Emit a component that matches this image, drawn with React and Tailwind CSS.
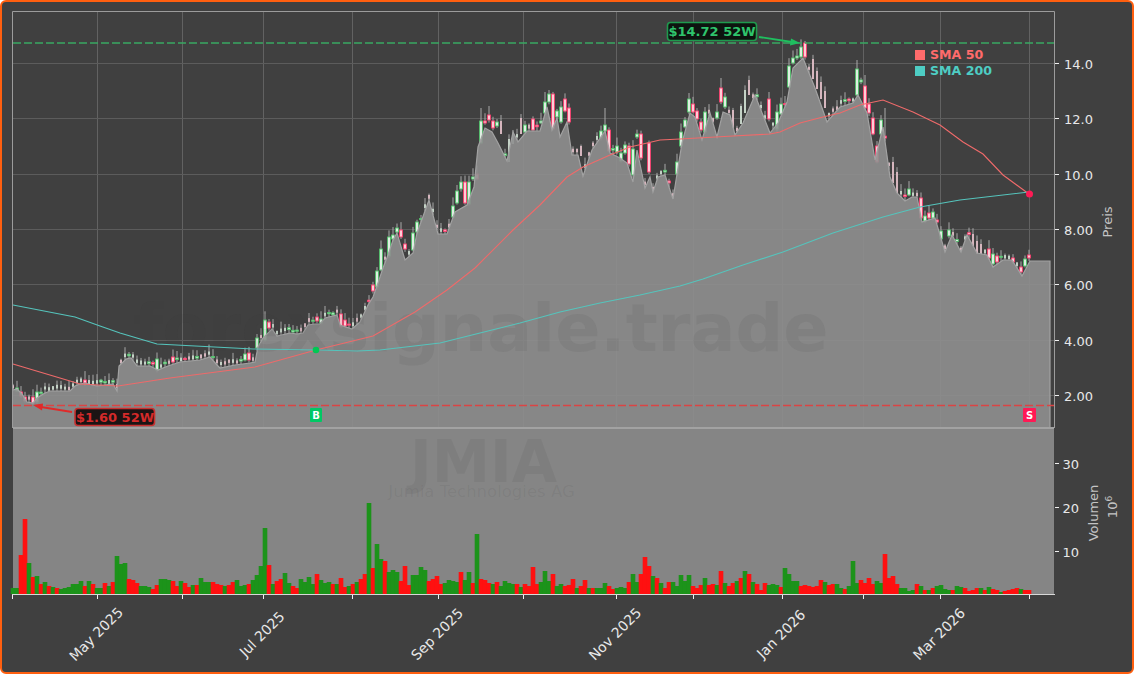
import React from 'react';

const toPoints = (s) => s.trim().split(/\s+/).map((p) => p.split(',').map(Number));

const CLOSE_LINE = toPoints(`13,390 17,389 22,394 27,402 33,403 37,398 45,393 50,391 70,391 75,386 80,384 85,383 92,385 97,386 105,385 113,384 117,391 119,366 126,359 131,358 137,366 150,366 158,370 168,366 180,362 200,360 210,357 217,365 220,368 235,365 250,363 255,362 258,347 263,338 272,329 277,336 290,333 297,334 303,333 308,325 315,324 320,324 325,318 337,315 340,325 352,329 360,322 368,305 373,297 378,283 383,268 388,255 393,240 397,233 405,260 413,253 417,233 429,200 438,234 447,234 455,212 467,205 474,187 478,147 485,128 492,132 498,143 507,161 513,132 518,142 527,131 540,131 547,107 552,130 557,118 560,137 567,122 572,155 578,155 583,176 592,150 605,131 610,153 620,158 627,163 633,182 637,150 645,188 650,177 653,192 658,177 665,175 673,199 682,143 690,113 695,117 702,140 710,113 717,137 723,112 730,115 735,135 743,123 755,95 770,133 778,123 787,102 793,68 803,58 815,88 827,122 840,107 853,103 858,95 867,113 875,160 883,127 890,177 897,193 905,201 912,197 917,197 922,222 935,218 945,252 952,235 961,252 967,235 977,253 987,255 993,267 1003,260 1012,260 1022,276 1030,261`);

const SMA50 = '13,364 80,384 118,386 170,378 255,367 316,350 373,336 415,312 447,290 475,268 513,230 540,205 567,177 583,167 610,155 630,147 660,140 680,139 733,136 770,134 780,132 800,123 823,117 840,113 860,105 883,100 913,112 940,125 963,142 983,154 1003,175 1029,194';
const SMA200 = '13,305 75,317 100,326 120,333 157,344 253,349 317,350 357,351 380,350 440,343 480,333 520,323 560,312 600,303 640,295 680,286 703,279 743,265 783,252 833,233 883,217 920,207 960,200 1029,192';

// [x, body top, body bottom, 1 green / 0 red]
const BIG_CANDLES = [
  [16,388,391,1],[20,392,396,0],[24,397,401,0],[32,397,403,0],[36,392,402,1],[85,380,383,0],[158,359,370,1],[173,357,362,0],
  [243,354,360,1],[247,353,360,0],[255,348,356,1],[258,338,348,1],[263,320,340,1],[267,322,328,0],[317,317,321,0],[320,319,323,1],
  [340,314,327,0],[344,320,326,0],[373,285,291,0],[377,271,287,1],[381,249,270,1],[389,237,256,1],[393,235,239,1],[397,228,232,1],
  [401,230,237,0],[405,244,249,0],[413,233,250,1],[417,222,232,1],[451,206,217,1],[455,191,203,1],[459,182,189,1],[463,182,203,0],
  [467,182,204,1],[471,177,179,1],[475,174,179,0],[479,121,143,1],[483,121,123,0],[487,115,120,0],[491,121,128,0],[495,122,126,1],
  [523,125,132,1],[531,119,130,0],[539,121,123,1],[543,102,113,1],[547,94,102,1],[551,94,129,0],[555,111,117,1],[559,107,122,1],
  [563,99,111,0],[567,108,122,0],[600,131,138,1],[604,125,131,1],[608,130,151,0],[616,146,152,1],[620,153,161,1],[624,145,153,1],
  [628,146,164,0],[632,149,175,1],[636,134,137,1],[640,134,158,0],[648,143,172,0],[677,162,174,1],[681,132,146,1],[685,120,127,1],
  [689,99,112,1],[693,104,112,0],[697,111,119,0],[701,122,130,0],[705,112,132,1],[717,112,118,1],[721,88,102,0],[725,97,107,1],
  [767,99,119,0],[775,112,129,1],[779,104,114,1],[787,66,87,1],[791,58,63,1],[795,56,58,1],[799,47,57,1],[803,43,57,0],
  [855,69,95,1],[859,80,82,1],[863,86,108,0],[867,104,113,0],[871,118,134,0],[875,146,162,0],[879,120,134,1],[908,189,195,1],
  [920,198,218,0],[924,216,221,1],[928,213,218,0],[932,212,218,1],[936,220,222,0],[940,231,239,1],[948,230,236,1],[989,249,258,0],
  [993,254,264,1],[997,256,262,0],[1013,258,262,0],[1021,267,272,0],[1025,259,266,1],[1029,255,258,0],
];

// washed out candles with a long body: [x, top, bottom, 1 green / 0 red]
const PALE_CANDLES = [
  [499,122,133,0],[507,140,161,1],[511,135,143,1],[519,119,133,0],[580,147,155,0],[734,111,127,0],[741,107,123,1],[746,91,112,1],
  [750,81,94,0],[811,60,78,0],[815,72,88,0],[819,83,98,0],[823,92,107,0],[892,163,182,0],[896,173,192,0],[973,235,245,0],[977,242,253,0],[981,245,253,0],
];

// wicks that reach well above the body: [x, high]
const TALL_WICKS = [[479,108],[487,106],[543,92],[547,90],[604,108],[689,93],[721,78],[767,92],[803,41],[855,60],[863,75],[883,108]];

// signed bar heights in px: positive green, negative red
const VOLUME = [
  6,6,-39,-75,31,-17,18,-10,12,-8,7,-6,5,6,7,10,10,13,-8,13,-10,6,6,-11,8,-12,38,30,31,-15,-14,-11,8,8,7,-5,-9,15,15,14,-13,-8,13,-11,-7,9,-9,16,12,12,-12,-10,-9,8,-9,-12,14,8,9,-10,14,19,28,66,-29,10,-13,-15,21,11,-8,-6,15,12,17,10,-20,14,11,12,-10,10,
  -16,-7,8,-10,12,-15,-20,91,-26,50,35,-33,22,24,22,-13,-28,-9,19,19,27,24,-13,-15,-18,-10,11,14,13,12,-22,14,22,-11,60,-15,-14,-11,10,-12,8,13,11,10,-10,7,-10,-8,-27,-10,12,23,13,-20,8,10,-8,-9,-15,6,-8,-14,6,-6,6,6,11,-8,-5,6,7,6,-12,20,12,-20,-37,-28,18,-16,11,-6,-12,12,8,
  19,13,19,-8,-6,-9,16,-9,-10,9,-23,11,-8,-11,13,-16,23,-20,12,-10,-4,-11,9,10,9,-7,26,20,13,13,-8,-9,-8,-7,-8,-14,12,-9,-10,10,6,-5,8,33,11,-14,-11,-16,-10,13,11,-40,-16,-18,-10,6,6,3,4,-10,8,-4,4,-6,8,9,5,4,-4,8,7,-6,-3,-4,-6,6,-4,7,-5,-4,2,-3,-4,-5,-6,5,-4,-4,
];

const GRID_X = [97.5, 182.5, 263.5, 352.5, 438.5, 523.5, 616.5, 693.5, 782.5, 863.5, 940.5, 1029.5];
const TICK_X = [12.5, ...GRID_X];
const PRICE_TICKS = [['14.0', 63.5], ['12.0', 118.5], ['10.0', 174.5], ['8.00', 229.5], ['6.00', 284.5], ['4.00', 340.5], ['2.00', 395.5]];
const VOL_TICKS = [['30', 463.5], ['20', 507.5], ['10', 551.5]];
const MONTHS = [['May 2025', 97], ['Jul 2025', 263], ['Sep 2025', 438], ['Nov 2025', 616], ['Jan 2026', 782], ['Mar 2026', 940]];

const rnd = (i, k) => {
  const v = Math.sin(i * 12.9898 + k * 78.233) * 43758.5453;
  return v - Math.floor(v);
};

const indexOf = (x) => Math.round((x - 13) / 4);

const lineY = (x) => {
  for (let n = 1; n < CLOSE_LINE.length; n++) {
    const [x1, y1] = CLOSE_LINE[n];
    if (x <= x1) {
      const [x0, y0] = CLOSE_LINE[n - 1];
      return y0 + ((x - x0) / (x1 - x0)) * (y1 - y0);
    }
  }
  return CLOSE_LINE[CLOSE_LINE.length - 1][1];
};

const buildCandles = () => {
  const big = new Map(BIG_CANDLES.map((c) => [indexOf(c[0]), c]));
  const pale = new Map(PALE_CANDLES.map((c) => [indexOf(c[0]), c]));
  const tall = new Map(TALL_WICKS.map((w) => [indexOf(w[0]), w[1]]));
  const out = [];
  for (let i = 0; i < 255; i++) {
    const x = 13 + i * 4;
    const hit = big.get(i);
    const soft = pale.get(i);
    let c;
    if (hit) {
      c = { x, top: hit[1], bottom: hit[2], up: hit[3] === 1, high: hit[1] - 2 - rnd(i, 1) * 7, low: hit[2] + 1 + rnd(i, 2) * 2, thin: false };
    } else if (soft) {
      c = { x, top: soft[1], bottom: soft[2], up: soft[3] === 1, high: soft[1] - 2 - rnd(i, 1) * 5, low: soft[2] + 1, thin: true };
    } else {
      const base = lineY(x);
      const top = base - 3 - rnd(i, 3) * 3;
      const size = 1 + rnd(i, 4);
      c = { x, top, bottom: top + size, up: rnd(i, 5) > 0.45, high: top - 1 - rnd(i, 1) * 7, low: base, thin: rnd(i, 6) > 0.3 };
    }
    if (tall.has(i)) c.high = tall.get(i);
    out.push(c);
  }
  return out;
};

const CANDLES = buildCandles();
const areaPoints = CLOSE_LINE.map((p) => p.join(',')).join(' ');
const textCls = "font-['DejaVu_Sans',sans-serif]";

const Candle = ({ c }) => (
  <g>
    <line x1={c.x} x2={c.x} y1={c.high} y2={c.low} className="stroke-[#b4b4b4]" strokeWidth="0.9" />
    {c.thin ? (
      <rect x={c.x - 1} y={c.top - 1} width="2" height={c.bottom - c.top + 2} className={c.up ? 'fill-[#c4d2c6]' : 'fill-[#d6b6be]'} />
    ) : (
      <rect
        x={c.x - 1.4}
        y={c.top}
        width="2.8"
        height={c.bottom - c.top}
        strokeWidth="0.9"
        className={c.up ? 'fill-[#e6f2e8] stroke-[#4fc46a]' : 'fill-[#ffd4dd] stroke-[#ff3d6e]'}
      />
    )}
  </g>
);

export default function App() {
  return (
    <div className="w-[1134px] h-[674px] bg-white">
      <div className="w-full h-full border-2 border-[#ff5f0f] rounded-md overflow-hidden bg-[#404040]">
        <svg width="1130" height="670" viewBox="2 2 1130 670" className="block">
          {/* grid */}
          {GRID_X.map((x) => (
            <line key={x} x1={x} x2={x} y1="12" y2="428" className="stroke-[#626262]" strokeWidth="1" />
          ))}
          {PRICE_TICKS.map(([t, y]) => (
            <line key={t} x1="13" x2="1054" y1={y} y2={y} className="stroke-[#5c5c5c]" strokeWidth="1" />
          ))}

          {/* candles, the area goes on top of them */}
          {CANDLES.map((c) => (
            <Candle key={c.x} c={c} />
          ))}
          <polygon points={`13,428 ${areaPoints} 1050,261 1050,428`} className="fill-[#8f8f8f]" fillOpacity="0.9" />
          <polyline points={`${areaPoints} 1050,261 1050,428`} fill="none" className="stroke-[#a2a2a2]" strokeWidth="1.2" />

          {/* volume panel */}
          <rect x="13" y="428" width="1041" height="166" className="fill-[#858585]" />
          <line x1="13" x2="1054" y1="428" y2="428" className="stroke-[#a2a2a2]" strokeWidth="2" />

          {/* watermarks */}
          <text x="481" y="351" textAnchor="middle" fontSize="66.7" fontWeight="700" className={`${textCls} fill-[#303030]`} fillOpacity="0.08">forexsignale.trade</text>
          <text x="483.5" y="482" textAnchor="middle" fontSize="58.5" fontWeight="700" className={`${textCls} fill-[#303030]`} fillOpacity="0.07">JMIA</text>
          <text x="481.5" y="497" textAnchor="middle" fontSize="16.5" className={`${textCls} fill-[#303030]`} fillOpacity="0.08">Jumia Technologies AG</text>

          {/* volume bars */}
          {VOLUME.map((v, i) => (
            <rect
              key={i}
              x={10.7 + i * 4}
              y={594 - Math.abs(v)}
              width="4.6"
              height={Math.abs(v)}
              className={v > 0 ? 'fill-[#1c931a]' : 'fill-[#ff1010]'}
            />
          ))}

          {/* moving averages */}
          <polyline points={SMA50} fill="none" className="stroke-[#ee6a6a]" strokeWidth="1.1" />
          <polyline points={SMA200} fill="none" className="stroke-[#55c4bc]" strokeWidth="1.1" />
          <circle cx="316" cy="350" r="3.3" className="fill-[#00c853]" />
          <circle cx="1029.5" cy="194" r="3.5" className="fill-[#ff1a55]" />

          {/* 52 week levels */}
          <line x1="13" x2="1054" y1="43" y2="43" className="stroke-[#38a862]" strokeWidth="1.6" strokeDasharray="8 3" />
          <line x1="13" x2="1054" y1="405.5" y2="405.5" className="stroke-[#db4444]" strokeWidth="1.6" strokeDasharray="8 3" />

          <line x1="759" y1="37" x2="792" y2="42" className="stroke-[#1fbf5f]" strokeWidth="1.8" />
          <polygon points="800,43 790,45.5 791,38.5" className="fill-[#1fbf5f]" />
          <rect x="667.5" y="22.5" width="89" height="18" rx="3" className="fill-[#0d140f] stroke-[#1f9a4e]" strokeWidth="1.6" />
          <text x="712" y="36" textAnchor="middle" fontSize="13" fontWeight="700" className={`${textCls} fill-[#2fc46c]`}>$14.72 52W</text>

          <line x1="72" y1="412" x2="41" y2="407" className="stroke-[#e02a2a]" strokeWidth="1.8" />
          <polygon points="33,405 43,403.5 42,410.5" className="fill-[#e02a2a]" />
          <rect x="75" y="408.5" width="79.5" height="17" rx="3" className="fill-[#1b1414] stroke-[#c93030]" strokeWidth="1.6" />
          <text x="115" y="422" textAnchor="middle" fontSize="13" fontWeight="700" className={`${textCls} fill-[#d42a2a]`}>$1.60 52W</text>

          {/* buy / sell */}
          <rect x="310" y="408" width="12" height="14" rx="1" className="fill-[#00c864]" />
          <text x="316" y="419" textAnchor="middle" fontSize="10" fontWeight="700" className={`${textCls} fill-white`}>B</text>
          <rect x="1023" y="408" width="13" height="14" rx="1" className="fill-[#ff1a55]" />
          <text x="1029.5" y="419" textAnchor="middle" fontSize="10" fontWeight="700" className={`${textCls} fill-white`}>S</text>

          {/* legend */}
          <rect x="915" y="50" width="10" height="10" className="fill-[#ff6b6b]" />
          <text x="930" y="58.5" fontSize="12.6" fontWeight="700" className={`${textCls} fill-[#ff6b6b]`}>SMA 50</text>
          <rect x="915" y="66" width="10" height="10" className="fill-[#4ecdc4]" />
          <text x="930" y="74.5" fontSize="12.6" fontWeight="700" className={`${textCls} fill-[#4ecdc4]`}>SMA 200</text>

          {/* spines */}
          <path d="M12.5 428V11.5H1054.5V428" fill="none" className="stroke-[#9c9c9c]" strokeWidth="1" />
          <line x1="12" x2="1055" y1="594.5" y2="594.5" className="stroke-[#d8d8d8]" strokeWidth="1" />

          {/* axes */}
          {PRICE_TICKS.map(([t, y]) => (
            <g key={t}>
              <line x1="1055" x2="1059" y1={y} y2={y} className="stroke-[#f0f0f0]" strokeWidth="1" />
              <text x="1093" y={y + 5} textAnchor="end" fontSize="13" className={`${textCls} fill-[#e8e8e8]`}>{t}</text>
            </g>
          ))}
          {VOL_TICKS.map(([t, y]) => (
            <g key={t}>
              <line x1="1055" x2="1059" y1={y} y2={y} className="stroke-[#f0f0f0]" strokeWidth="1" />
              <text x="1079" y={y + 5} textAnchor="end" fontSize="13" className={`${textCls} fill-[#e8e8e8]`}>{t}</text>
            </g>
          ))}
          {TICK_X.map((x) => (
            <line key={x} x1={x} x2={x} y1="595" y2="599" className="stroke-[#f0f0f0]" strokeWidth="1" />
          ))}
          {MONTHS.map(([t, x]) => (
            <text
              key={t}
              x={x - 1}
              y={639}
              textAnchor="middle"
              fontSize="14"
              transform={`rotate(-45 ${x - 1} 634)`}
              className={`${textCls} fill-[#e8e8e8]`}
            >
              {t}
            </text>
          ))}

          <text x="1106.5" y="227" textAnchor="middle" fontSize="13" transform="rotate(-90 1106.5 222)" className={`${textCls} fill-[#c4c4c4]`}>Preis</text>
          <text x="1092.5" y="518" textAnchor="middle" fontSize="13" transform="rotate(-90 1092.5 513)" className={`${textCls} fill-[#c4c4c4]`}>Volumen</text>
          <text x="1111.5" y="512" textAnchor="middle" fontSize="13" transform="rotate(-90 1111.5 507)" className={`${textCls} fill-[#c4c4c4]`}>
            10<tspan fontSize="9" dy="-5">6</tspan>
          </text>
        </svg>
      </div>
    </div>
  );
}
